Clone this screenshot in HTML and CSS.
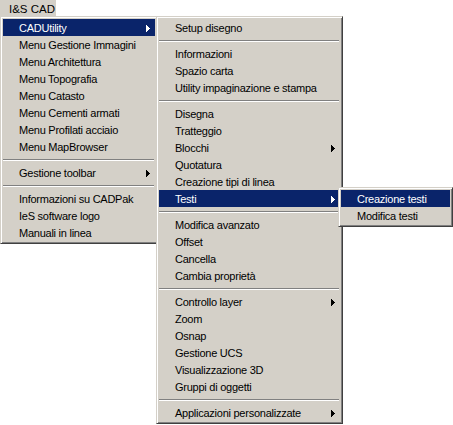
FILE: index.html
```html
<!DOCTYPE html>
<html>
<head>
<meta charset="utf-8">
<link rel="stylesheet" href="styles.css">
</head>
<body>
<div class="menubar"><div class="menubar-item">I&amp;S CAD</div></div>
<div class="menu menu-main">
  <div class="item active">CADUtility<svg class="arrow" width="4" height="7" viewBox="0 0 4 7"><path d="M0 0h1v1h1v1h1v1h1v1h-1v1h-1v1h-1v1h-1z"/></svg>
    <div class="menu submenu sub-cad">
      <div class="item">Setup disegno</div>
      <div class="sep"></div>
      <div class="item">Informazioni</div>
      <div class="item">Spazio carta</div>
      <div class="item">Utility impaginazione e stampa</div>
      <div class="sep"></div>
      <div class="item">Disegna</div>
      <div class="item">Tratteggio</div>
      <div class="item">Blocchi<svg class="arrow" width="4" height="7" viewBox="0 0 4 7"><path d="M0 0h1v1h1v1h1v1h1v1h-1v1h-1v1h-1v1h-1z"/></svg></div>
      <div class="item">Quotatura</div>
      <div class="item">Creazione tipi di linea</div>
      <div class="item active">Testi<svg class="arrow" width="4" height="7" viewBox="0 0 4 7"><path d="M0 0h1v1h1v1h1v1h1v1h-1v1h-1v1h-1v1h-1z"/></svg>
        <div class="menu submenu sub-testi">
          <div class="item active">Creazione testi</div>
          <div class="item">Modifica testi</div>
        </div>
      </div>
      <div class="sep"></div>
      <div class="item">Modifica avanzato</div>
      <div class="item">Offset</div>
      <div class="item">Cancella</div>
      <div class="item">Cambia proprietà</div>
      <div class="sep"></div>
      <div class="item">Controllo layer<svg class="arrow" width="4" height="7" viewBox="0 0 4 7"><path d="M0 0h1v1h1v1h1v1h1v1h-1v1h-1v1h-1v1h-1z"/></svg></div>
      <div class="item">Zoom</div>
      <div class="item">Osnap</div>
      <div class="item">Gestione UCS</div>
      <div class="item">Visualizzazione 3D</div>
      <div class="item">Gruppi di oggetti</div>
      <div class="sep"></div>
      <div class="item">Applicazioni personalizzate<svg class="arrow" width="4" height="7" viewBox="0 0 4 7"><path d="M0 0h1v1h1v1h1v1h1v1h-1v1h-1v1h-1v1h-1z"/></svg></div>
    </div>
  </div>
  <div class="item">Menu Gestione Immagini</div>
  <div class="item">Menu Architettura</div>
  <div class="item">Menu Topografia</div>
  <div class="item">Menu Catasto</div>
  <div class="item">Menu Cementi armati</div>
  <div class="item">Menu Profilati acciaio</div>
  <div class="item">Menu MapBrowser</div>
  <div class="sep"></div>
  <div class="item">Gestione toolbar<svg class="arrow" width="4" height="7" viewBox="0 0 4 7"><path d="M0 0h1v1h1v1h1v1h1v1h-1v1h-1v1h-1v1h-1z"/></svg></div>
  <div class="sep"></div>
  <div class="item">Informazioni su CADPak</div>
  <div class="item">IeS software logo</div>
  <div class="item">Manuali in linea</div>
</div>
</body>
</html>
```
FILE: styles.css
```css
html, body {
  margin: 0;
  padding: 0;
  background: #ffffff;
}
body {
  width: 453px;
  height: 425px;
  overflow: hidden;
  font-family: "Liberation Sans", Arial, sans-serif;
  font-size: 11px;
  color: #000;
}
.menubar {
  display: flex;
  height: 16px;
}
.menubar-item {
  background: #d4d0c8;
  width: 56px;
  box-sizing: border-box;
  padding: 2px 0 0 9px;
  line-height: 14px;
  font-size: 11.5px;
  white-space: nowrap;
}
.menu {
  background: #d4d0c8;
  border: 1px solid;
  border-color: #d4d0c8 #404040 #404040 #d4d0c8;
  box-shadow: inset 1px 1px 0 #ffffff, inset -1px -1px 0 #808080;
  padding: 2px;
  box-sizing: border-box;
  color: #000;
}
.menu-main {
  width: 158px;
  position: relative;
}
.item {
  position: relative;
  height: 16px;
  line-height: 16px;
  padding: 1px 5px 0 16px;
  display: flex;
  align-items: center;
  justify-content: space-between;
  white-space: nowrap;
  letter-spacing: -0.25px;
  color: #000;
}
.item.active {
  background: #0a246a;
  color: #fff;
}
.arrow {
  display: block;
  margin-top: 1px;
  fill: currentColor;
  shape-rendering: crispEdges;
}
.sep {
  height: 0;
  border-top: 1px solid #808080;
  border-bottom: 1px solid #ffffff;
  margin: 4px 1px 3px 0;
}
.submenu {
  position: absolute;
  top: -3px;
}
.sub-cad {
  left: calc(100% + 1px);
  width: 187px;
  letter-spacing: normal;
}
.sub-testi {
  left: calc(100% - 2px);
  width: 115px;
}
```
